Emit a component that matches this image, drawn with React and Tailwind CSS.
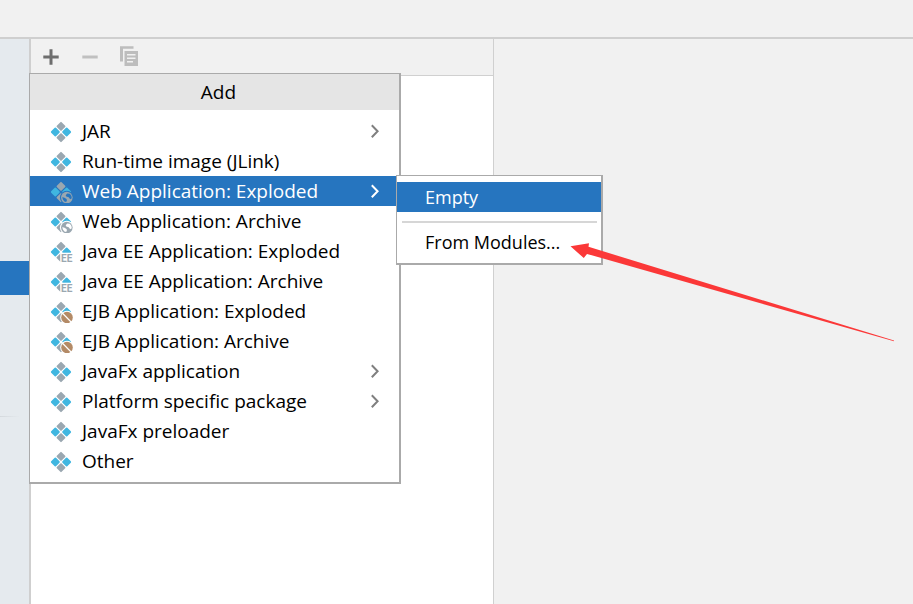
import React from "react";

const ITEMS = [
  { label: "JAR", submenu: true },
  { label: "Run-time image (JLink)" },
  { label: "Web Application: Exploded", badge: "web", submenu: true, selected: true },
  { label: "Web Application: Archive", badge: "web" },
  { label: "Java EE Application: Exploded", badge: "ee" },
  { label: "Java EE Application: Archive", badge: "ee" },
  { label: "EJB Application: Exploded", badge: "ejb" },
  { label: "EJB Application: Archive", badge: "ejb" },
  { label: "JavaFx application", submenu: true },
  { label: "Platform specific package", submenu: true },
  { label: "JavaFx preloader" },
  { label: "Other" },
];

function ArtifactIcon({ badge, selected }) {
  const halo = selected ? "#2675bf" : "#ffffff";
  return (
    <svg width="24" height="24" viewBox="0 0 24 24" className="shrink-0" aria-hidden="true">
      <g transform="rotate(45 12 13)">
        <rect x="4.6" y="5.6" width="6.8" height="6.8" rx="0.9" fill="#9aa7b0" />
        <rect x="12.6" y="13.6" width="6.8" height="6.8" rx="0.9" fill="#9aa7b0" />
        <rect x="4.6" y="13.6" width="6.8" height="6.8" rx="0.9" fill="#40b6e0" />
        <rect x="12.6" y="5.6" width="6.8" height="6.8" rx="0.9" fill="#40b6e0" />
      </g>
      {badge === "web" && (
        <g>
          <circle cx="17.8" cy="18.6" r="6.9" fill={halo} />
          <circle cx="17.8" cy="18.6" r="5.8" fill="#9aa7b0" />
          <path d="M13.2 18.2l1.8.4 2.2 1.1.8 1.4-.8 1.8-1.8-.5-1.5-1.8z" fill={halo} />
          <path d="M18.2 14.4l2.6.4 1.6 2 .4 2.4-1.6 1-1.5-2-2.4-.6-.6-1.4z" fill={halo} />
        </g>
      )}
      {badge === "ee" && (
        <g>
          <path d="M11.2 13.7H24V24H11.2z" fill={halo} />
          <text x="12" y="23" fill="#9aa7b0" className="font-['Roboto',sans-serif] text-[10px] font-bold">
            EE
          </text>
        </g>
      )}
      {badge === "ejb" && (
        <g>
          <circle cx="18" cy="18.5" r="6.8" fill={halo} />
          <circle cx="18" cy="18.5" r="5.8" fill="#b38a66" />
          <path d="M13 13.8l9.8 9.8" stroke={halo} strokeWidth="1.3" />
        </g>
      )}
    </svg>
  );
}

function Chevron({ selected }) {
  return (
    <svg
      width="10"
      height="14"
      viewBox="0 0 10 14"
      fill="none"
      strokeWidth="2"
      className={selected ? "ml-auto stroke-white" : "ml-auto stroke-[#7f7f7f]"}
      aria-hidden="true"
    >
      <path d="M1.8 1.2L7.6 7.2 1.8 13.2" />
    </svg>
  );
}

function SubMenu() {
  return (
    <ul className="absolute -top-px left-[366px] z-10 w-[207px] border border-r-2 border-b-2 border-[#aaaaaa] bg-white py-1.5 text-[18px] text-black">
      <li>
        <button type="button" className="flex h-[30px] w-full items-center bg-[#2675bf] pl-7 text-left text-white">
          Empty
        </button>
      </li>
      <li aria-hidden="true" className="flex h-[15px] items-center px-1 pt-1 pl-[5px]">
        <div className="h-0.5 w-full bg-[#d6d6d6]" />
      </li>
      <li>
        <button type="button" className="flex h-[30px] w-full items-center pl-7 text-left">
          From Modules...
        </button>
      </li>
    </ul>
  );
}

function AddMenu() {
  return (
    <div className="absolute top-[34px] -left-0.5 w-[372px] border border-r-2 border-b-2 border-[#aaaaaa] bg-white">
      <h2 className="flex h-9 items-center justify-center bg-[#e5e5e5] pl-2">Add</h2>
      <ul className="py-1.5">
        {ITEMS.map((item) => (
          <li key={item.label} className="relative">
            <button
              type="button"
              className={
                item.selected
                  ? "flex h-[30px] w-full items-center gap-[9px] bg-[#2675bf] pr-[19px] pl-[19px] text-left text-white"
                  : "flex h-[30px] w-full items-center gap-[9px] pr-[19px] pl-[19px] text-left"
              }
            >
              <ArtifactIcon badge={item.badge} selected={item.selected} />
              <span>{item.label}</span>
              {item.submenu && <Chevron selected={item.selected} />}
            </button>
            {item.selected && <SubMenu />}
          </li>
        ))}
      </ul>
    </div>
  );
}

function Toolbar() {
  return (
    <div className="flex h-[37px] items-center gap-[19px] border-b border-[#d0d0d0] bg-[#f1f1f1] pl-2.5">
      <button type="button" aria-label="Add">
        <svg width="20" height="20" viewBox="0 0 20 20" fill="none" stroke="#6e6e6e" strokeWidth="3">
          <path d="M10 2.3v15.4M2.3 10h15.4" />
        </svg>
      </button>
      <button type="button" aria-label="Remove" disabled>
        <svg width="20" height="20" viewBox="0 0 20 20" fill="none" stroke="#c0c0c0" strokeWidth="3">
          <path d="M2.3 10h15.4" />
        </svg>
      </button>
      <button type="button" aria-label="Copy" disabled>
        <svg width="20" height="20" viewBox="0 0 20 20" fill="#bdbdbd" className="overflow-visible">
          <path d="M1-.8h13.5v2.6H4V14.5H1z" />
          <path fillRule="evenodd" d="M5.5 4H19v15H5.5zM8 7v1.5h8.5V7zM8 10.5V12h8.5v-1.5zM8 14v1.5h6V14z" />
        </svg>
      </button>
    </div>
  );
}

function PointerArrow() {
  return (
    <svg
      width="330"
      height="104"
      viewBox="0 0 330 104"
      className="pointer-events-none absolute top-[241px] left-[568px] z-20"
      aria-hidden="true"
    >
      <path d="M2.5 5.2L21 2.2l-.5 3.6L326 99.6v.6L19 12.9l-3.2 4.2z" fill="#fb3838" />
    </svg>
  );
}

export default function App() {
  return (
    <div className="relative flex min-h-screen flex-col overflow-hidden bg-[#f1f1f1] font-['Open_Sans','Noto_Sans',sans-serif] text-[19px] leading-6 text-black">
      <header className="h-[39px] border-b-2 border-[#cfcfcf]" />
      <main className="flex flex-1">
        <nav className="w-[29px] shrink-0 bg-[#e5eaee] pt-[222px]">
          <div className="h-[34px] bg-[#2675bf]" />
          <div className="mt-[121px] h-px w-5 bg-linear-to-r from-[#d4d9dd] to-[#e5eaee]" />
        </nav>
        <section className="relative w-[465px] shrink-0 border-r border-l-2 border-r-[#d0d0d0] border-l-[#cfcfcf] bg-white">
          <Toolbar />
          <AddMenu />
        </section>
        <section className="flex-1" />
      </main>
      <PointerArrow />
    </div>
  );
}
